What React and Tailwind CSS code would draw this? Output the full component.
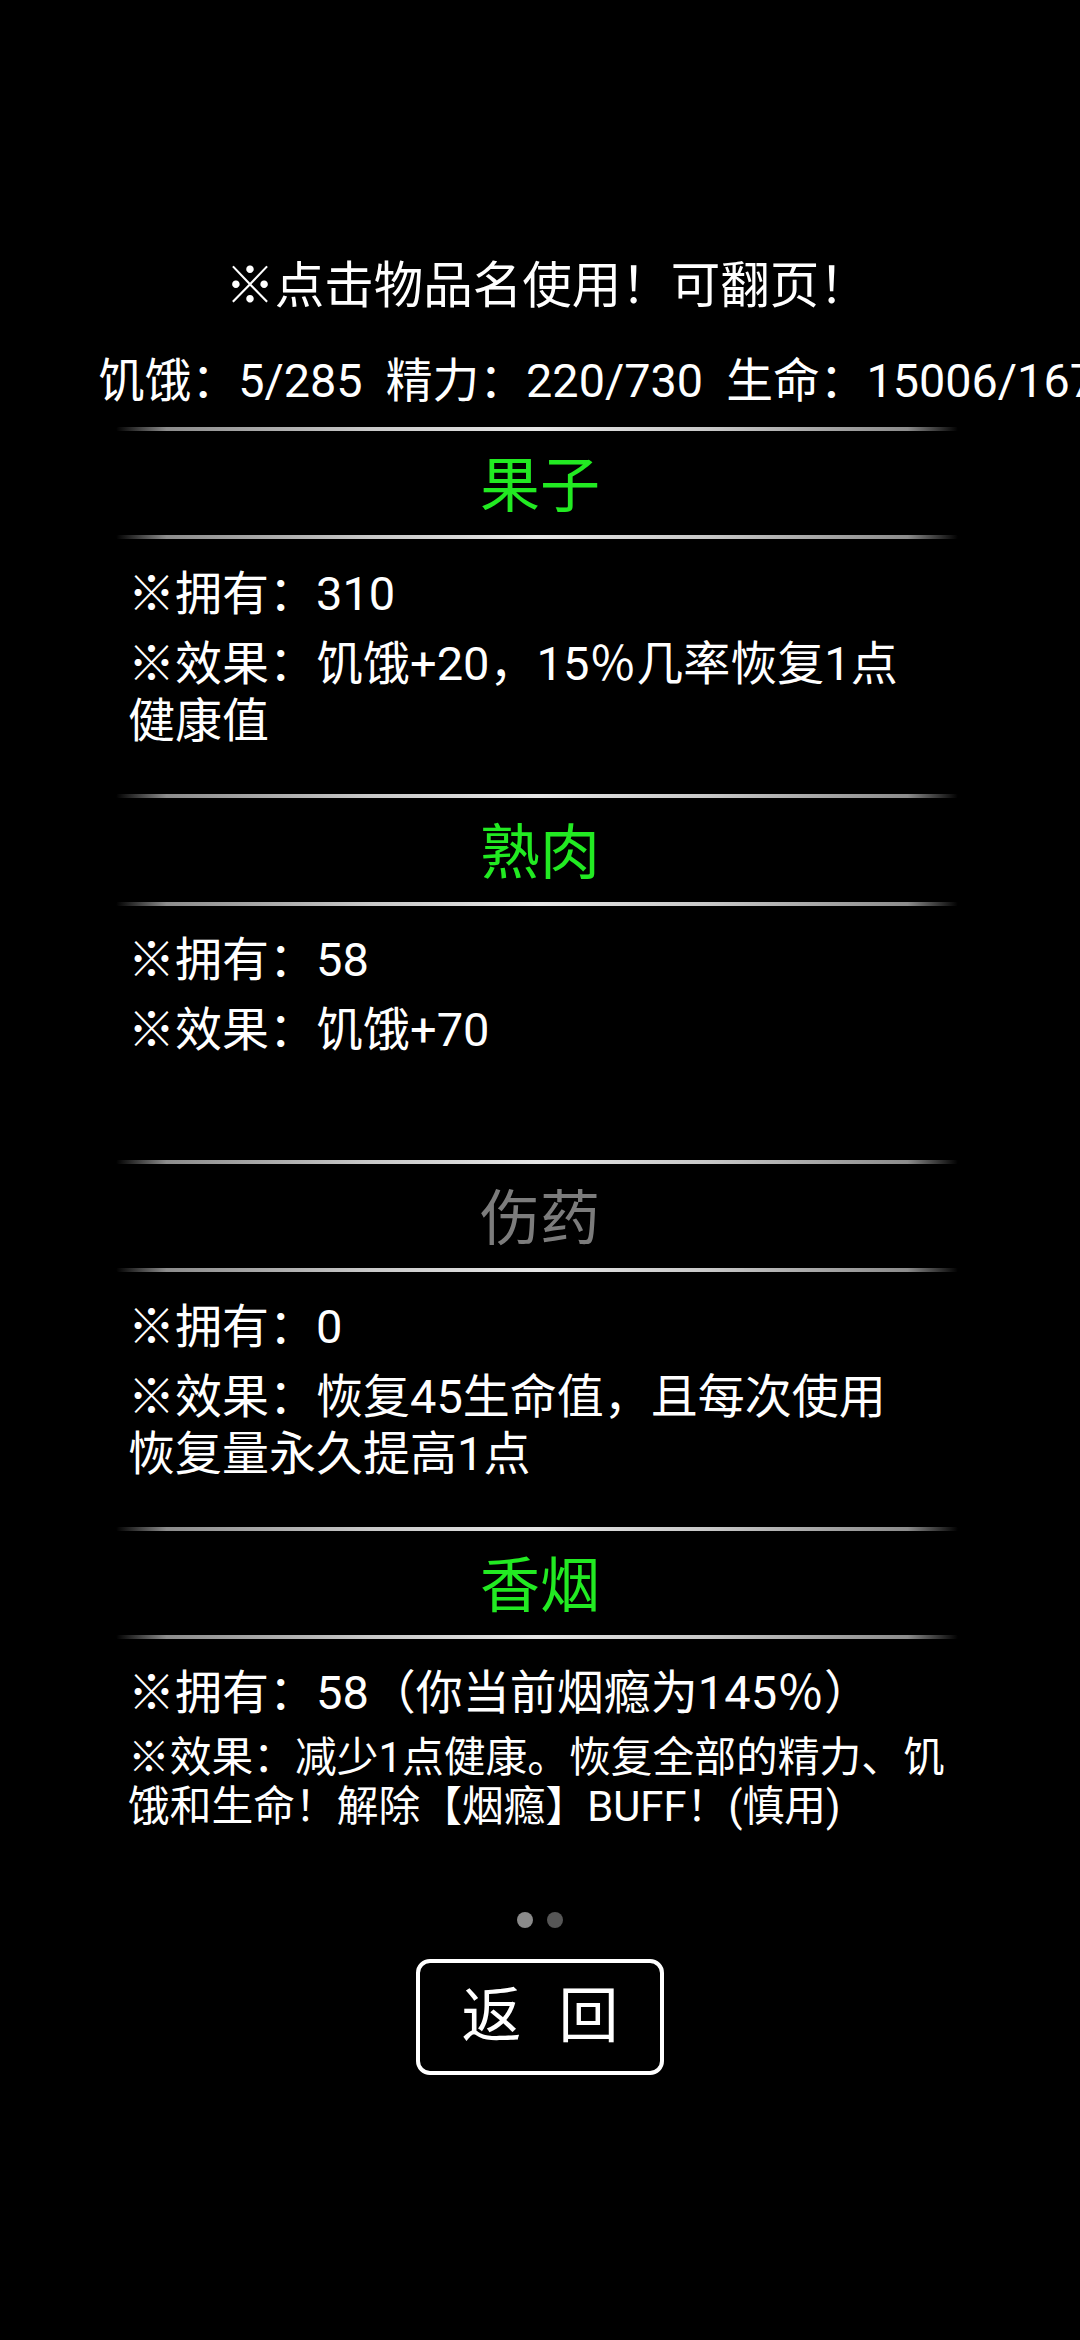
import React from "react";

const items = [
  {
    name: "果子",
    color: "text-[#22ea22]",
    own: "※拥有：310",
    effect: ["※效果：饥饿+20，15％几率恢复1点", "健康值"],
    small: false,
  },
  {
    name: "熟肉",
    color: "text-[#22ea22]",
    own: "※拥有：58",
    effect: ["※效果：饥饿+70"],
    small: false,
  },
  {
    name: "伤药",
    color: "text-[#7c7c7c]",
    own: "※拥有：0",
    effect: ["※效果：恢复45生命值，且每次使用", "恢复量永久提高1点"],
    small: false,
  },
  {
    name: "香烟",
    color: "text-[#22ea22]",
    own: "※拥有：58（你当前烟瘾为145％）",
    effect: ["※效果：减少1点健康。恢复全部的精力、饥", "饿和生命！解除【烟瘾】BUFF！(慎用)"],
    small: true,
  },
];

function Divider() {
  return (
    <div className="ml-[116px] w-[842px] h-[4px] rounded-full bg-[linear-gradient(90deg,transparent_0%,#8c8c8c_6%,#c8c8c8_30%,#e6e6e6_50%,#c8c8c8_70%,#8c8c8c_94%,transparent_100%)]" />
  );
}

function Item({ item }) {
  return (
    <div className="h-[366.5px] flex flex-col">
      <Divider />
      <div className={`h-[104px] pt-[8px] flex items-center justify-center text-[60px] leading-none ${item.color}`}>
        {item.name}
      </div>
      <Divider />
      <div className="pl-[128px] pt-[25.5px] whitespace-nowrap">
        <div className="text-[47px] leading-[57px]">{item.own}</div>
        {item.small ? (
          <div className="mt-[12px] text-[41.75px] leading-[49px]">
            {item.effect.map((l, i) => (
              <div key={i}>{l}</div>
            ))}
          </div>
        ) : (
          <div className="mt-[13px] text-[47px] leading-[57px]">
            {item.effect.map((l, i) => (
              <div key={i}>{l}</div>
            ))}
          </div>
        )}
      </div>
    </div>
  );
}

export default function App() {
  return (
    <div className="w-[1080px] h-[2340px] bg-black text-white overflow-hidden font-['Roboto','Noto_Sans_CJK_SC',sans-serif]">
      <div className="pt-[256px]">
        <div className="h-[60px] leading-[60px] text-[49.5px] text-center pl-[14px] whitespace-nowrap">
          ※点击物品名使用！可翻页！
        </div>
      </div>
      <div className="mt-[36.5px] h-[57px] leading-[57px] text-[46.75px] pl-[98px] whitespace-pre">
        {"饥饿：5/285  精力：220/730  生命：15006/16700"}
      </div>
      <div className="mt-[17.5px]">
        {items.map((it) => (
          <Item key={it.name} item={it} />
        ))}
      </div>
      <div className="mt-[19px] flex justify-center gap-[14px]">
        <div className="w-[16px] h-[16px] rounded-full bg-[#8a8a8a]" />
        <div className="w-[16px] h-[16px] rounded-full bg-[#565656]" />
      </div>
      <div className="mt-[31px] flex justify-center">
        <div className="w-[248px] h-[116px] border-[4px] border-white rounded-[14px] flex items-center justify-center gap-[37px] text-[60px] leading-none">
          <span>返</span>
          <span>回</span>
        </div>
      </div>
    </div>
  );
}
